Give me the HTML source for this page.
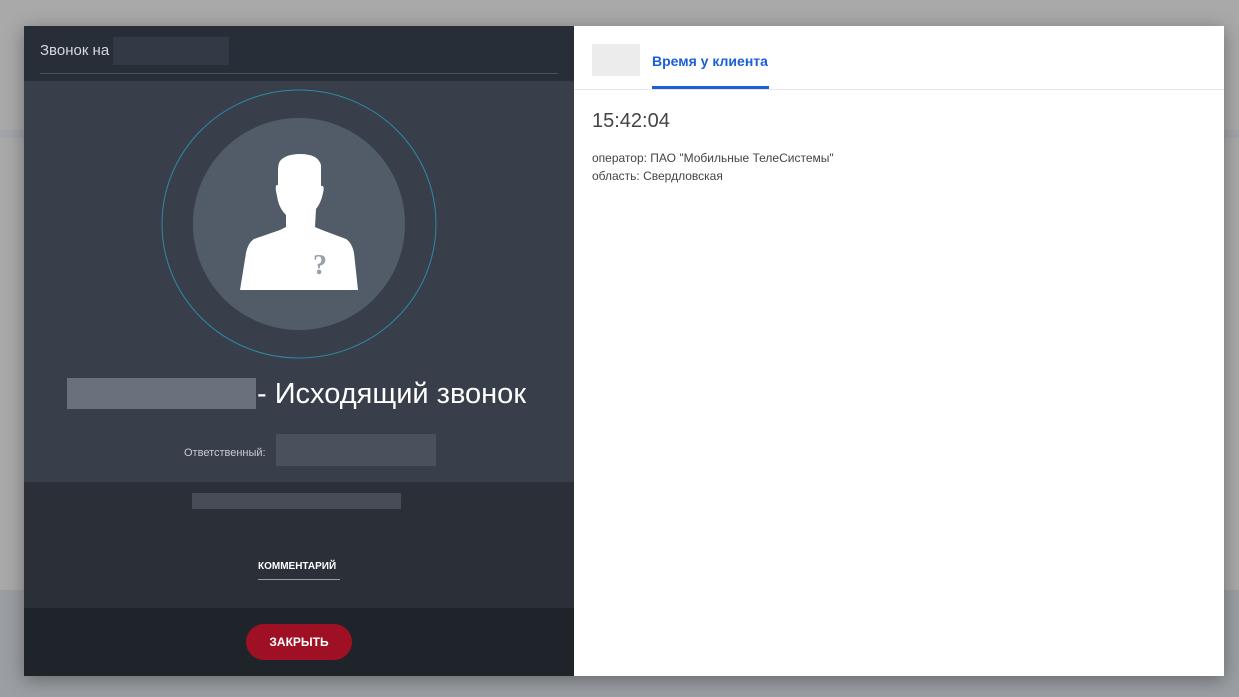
<!DOCTYPE html>
<html><head><meta charset="utf-8"><style>
*{margin:0;padding:0;box-sizing:border-box}
body{width:1239px;height:697px;overflow:hidden;background:#a9a9a9;font-family:"Liberation Sans",sans-serif;position:relative}
.bg2{position:absolute;left:0;top:590px;width:1239px;height:107px;background:#9b9fa3}
.strip{position:absolute;left:0;top:130px;width:1239px;height:8px;background:#a1a4a8}
.modal{position:absolute;left:24px;top:26px;width:1200px;height:650px;box-shadow:0 4px 18px rgba(0,0,0,.35)}
.left{position:absolute;left:0;top:0;width:550px;height:650px;background:#383f4a}
.hdr{position:absolute;left:0;top:0;width:550px;height:55px;background:#282e38}
.hdr .t{position:absolute;left:16px;top:16px;color:#d5d8dc;font-size:15px}
.hdr .ln{position:absolute;left:16px;top:47px;width:518px;height:1px;background:#4a505a}
.px{position:absolute;background:#3a414c}
.low{position:absolute;left:0;top:456px;width:550px;height:126px;background:#2a2f38}
.foot{position:absolute;left:0;top:582px;width:550px;height:68px;background:#1f232a}
.btn{position:absolute;left:222px;top:598px;width:106px;height:36px;border-radius:18px;background:#9f1024;color:#fff;font-weight:bold;font-size:12px;text-align:center;line-height:36px}
.right{position:absolute;left:550px;top:0;width:650px;height:650px;background:#fff}
</style></head><body>
<div class="strip"></div><div class="bg2"></div>
<div class="modal">
<div class="left">
<div class="hdr"><div class="t">Звонок на</div><div class="px" style="left:89px;top:11px;width:116px;height:28px;background:#333a45"></div><div class="ln"></div></div>
<svg style="position:absolute;left:0;top:55px" width="550" height="401">
<ellipse cx="275" cy="143" rx="137" ry="134" fill="none" stroke="#2d8aa6" stroke-width="1"/>
<circle cx="275" cy="143" r="106" fill="#525c69"/>
<path d="M256 80 Q262 73 276 73 Q294 73 297 84 L297 105 Q301 104 299 112 Q297 122 292 128 L291 146 L298 149 L322 158 Q328 162 330 172 L334 209 L216 209 L222 172 Q224 162 230 158 L256 149 L262 146 L262 134 Q256 128 254 120 L252 110 Q251 103 254 104 L254 90 Q254 83 256 80 Z" fill="#fff"/>
<text x="296" y="193" font-family="Liberation Serif,serif" font-weight="bold" font-size="28" fill="#9aa0a8" text-anchor="middle">?</text>
</svg>
<div class="px" style="left:43px;top:352px;width:189px;height:31px;background:#6a717c"></div>
<div style="position:absolute;left:233px;top:352px;color:#fff;font-size:29px">- Исходящий звонок</div>
<div style="position:absolute;left:160px;top:421px;color:#c8cbd0;font-size:11px">Ответственный:</div>
<div class="px" style="left:252px;top:408px;width:160px;height:32px;background:#4a515c"></div>
<div class="low"></div>
<div class="px" style="left:168px;top:467px;width:209px;height:16px;background:#474d57"></div>
<div style="position:absolute;left:234px;top:535px;color:#fff;font-size:10px;font-weight:bold">КОММЕНТАРИЙ</div>
<div style="position:absolute;left:234px;top:553px;width:82px;height:1px;background:#9aa0a8"></div>
<div class="foot"></div>
<div class="btn">ЗАКРЫТЬ</div>
</div>
<div class="right">
<div style="position:absolute;left:18px;top:18px;width:48px;height:32px;background:#ececec"></div>
<div style="position:absolute;left:78px;top:27px;color:#1a5fd6;font-weight:bold;font-size:14px">Время у клиента</div>
<div style="position:absolute;left:78px;top:60px;width:117px;height:3px;background:#1a5fd6"></div>
<div style="position:absolute;left:0;top:63px;width:650px;height:1px;background:#e8e8e8"></div>
<div style="position:absolute;left:18px;top:84px;color:#444;font-size:20px">15:42:04</div>
<div style="position:absolute;left:18px;top:123px;color:#444;font-size:12px;line-height:18px">оператор: ПАО "Мобильные ТелеСистемы"<br>область: Свердловская</div>
</div>
</div>
</body></html>
